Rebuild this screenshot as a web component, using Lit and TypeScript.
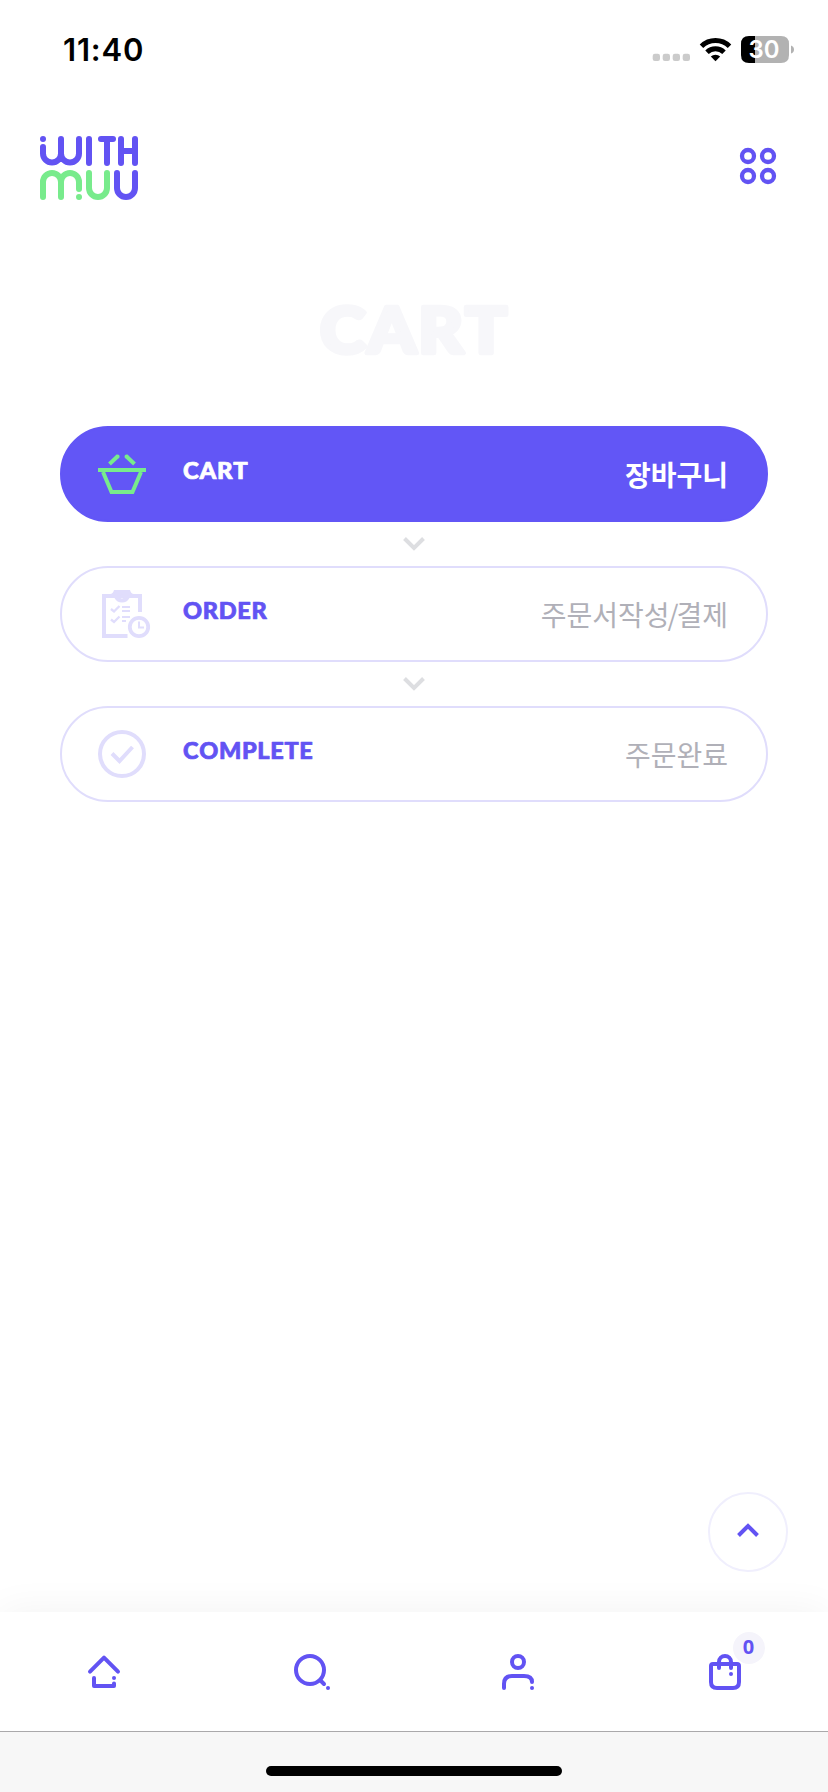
import { LitElement, html, css, svg } from "lit";
import { customElement } from "lit/decorators.js";

interface Step {
  label: string;
  width: number;
  caption: unknown;
  icon: unknown;
  active?: boolean;
}

const basket = html`<svg viewBox="98 448 52 52" width="52" height="52" fill="none" stroke="#78eb8c" stroke-width="4">
  <path d="M98 470H146M103 472L111.5 492H132.5L141 472" />
  <path d="M109.5 464L118 456M134.500 464L126 456" />
  <path d="M117.500 456.500h.1M126.500 456.500h.1" stroke-linecap="round" />
</svg>`;

const order = html`<svg viewBox="98 588 52 52" width="52" height="52" fill="none" stroke="#e0ddfc" stroke-width="4">
  <path d="M140 612V596H104V636H127.500" />
  <path fill="#e0ddfc" stroke="none" fill-rule="evenodd"
    d="M110 594Q113 594 114 590H130Q131 594 134 594V598H129.500Q127 602.500 122 602.500T114.500 598H110ZM122 594A2.200 2.200 0 1 0 122 598.400A2.200 2.200 0 1 0 122 594Z" />
  <path d="M111 609L114 611.500L119.500 606M111 619.500L114 622L119.500 616.500" stroke-width="2.300" />
  <path d="M122 607H130M122 611H130M122 617H130M122 621H126" stroke-width="1.800" />
  <circle cx="139" cy="627" r="9.200" stroke-width="3.800" />
  <path d="M139 621.500V627.500H144" stroke-width="2" />
</svg>`;

const complete = html`<svg viewBox="98 728 52 52" width="52" height="52" fill="none" stroke="#e0ddfc" stroke-width="4">
  <circle cx="122" cy="754" r="22" />
  <path d="M112 753.500L119.500 761L132.500 747" />
</svg>`;

const steps: Step[] = [
  { label: "CART", width: 65, caption: "장바구니", icon: basket, active: true },
  { label: "ORDER", width: 84, caption: html`주문서작성<span class="slash">/</span>결제`, icon: order },
  { label: "COMPLETE", width: 130, caption: "주문완료", icon: complete },
];

const navIcons = [
  { box: "86 1650 36 44", body: svg`<path d="M90 1671.700L104 1657.700L118 1671.700M94 1678V1686H114V1683.500M114 1678h.01" />` },
  { box: "292 1650 36 44", body: svg`<circle cx="309" cy="1670" r="14" /><path d="M319.500 1680.500L323 1684M327 1688h.01" />` },
  { box: "500 1650 36 44", body: svg`<circle cx="518" cy="1662" r="6" /><path d="M504 1688V1684Q504 1676 512 1676H524Q532 1676 532 1682M532 1688h.01" />` },
  { box: "707 1650 36 44", body: svg`<path d="M713 1664H737Q739 1664 739 1666V1682Q739 1688 733 1688H717Q711 1688 711 1682V1666Q711 1664 713 1664ZM719 1668V1662A6 6 0 0 1 731 1662V1668M731 1674h.01" />` },
];

@customElement("app-root")
export class AppRoot extends LitElement {
  static styles = css`
    :host {
      display: flex;
      flex-direction: column;
      height: 1792px;
      position: relative;
      overflow: hidden;
      background: #fff;
      font-family: Inter, "Noto Sans CJK KR", sans-serif;
    }
    svg { display: block; flex: none; overflow: visible; }
    .status {
      height: 100px;
      box-sizing: border-box;
      padding: 0 34px 0 63px;
      display: flex;
      align-items: center;
      justify-content: space-between;
    }
    .time { font-size: 31px; font-weight: 600; line-height: 40px; letter-spacing: 0.8px; }
    .header {
      height: 132px;
      box-sizing: border-box;
      padding: 0 50px 0 40px;
      display: flex;
      align-items: center;
      justify-content: space-between;
    }
    .title {
      height: 194px;
      display: flex;
      align-items: center;
      justify-content: center;
    }
    .rounded { font-family: Lato, sans-serif; font-weight: 900; font-kerning: none; letter-spacing: 0.03em; stroke-linejoin: round; }
    .steps { padding: 0 60px; display: flex; flex-direction: column; flex: 1; }
    .card {
      height: 96px;
      box-sizing: border-box;
      border: 2px solid #e0ddfc;
      border-radius: 48px;
      padding: 0 38px 0 36px;
      display: flex;
      align-items: center;
      color: #6253f3;
    }
    .card.active { background: #6256f6; border-color: #6256f6; color: #fff; }
    .label { margin-left: 33px; }
    .caption {
      margin-left: auto;
      font-family: "Noto Sans CJK KR", sans-serif;
      font-size: 28px;
      line-height: 40px;
      font-weight: 400;
      color: #b0b0b8;
    }
    .slash { margin: 0 -2px; }
    .active .caption { font-weight: 700; color: #fff; }
    .gap { height: 44px; display: flex; align-items: center; justify-content: center; }
    .top {
      position: absolute;
      left: 708px;
      top: 1492px;
      width: 80px;
      height: 80px;
      box-sizing: border-box;
      border: 2px solid #f0effd;
      border-radius: 50%;
      background: #fff;
      display: flex;
      align-items: center;
      justify-content: center;
    }
    .nav {
      height: 119px;
      display: grid;
      grid-template-columns: repeat(4, 1fr);
      align-items: center;
      justify-items: center;
      background: #fff;
      box-shadow: 0 0 40px rgba(0, 0, 0, 0.055);
    }
    .item { position: relative; }
    .badge {
      position: absolute;
      left: 26px;
      top: -18px;
      width: 32px;
      height: 32px;
      border-radius: 50%;
      background: #f5f4fb;
      color: #6253f3;
      font: 700 20px/30px "Open Sans", sans-serif;
      text-align: center;
    }
    .footer {
      height: 61px;
      box-sizing: border-box;
      border-top: 1px solid #aaa9ab;
      background: #f7f7f7;
      padding-top: 34px;
    }
    .indicator { width: 296px; height: 10px; border-radius: 5px; background: #000; margin: 0 auto; }
  `;

  render() {
    return html`
      <div class="status">
        <span class="time">11:40</span>
        <svg viewBox="652 30 142 40" width="142" height="40">
          <g fill="#cbcbcb">
            ${[652.700, 662.700, 672.700, 682.700].map((x) => svg`<rect x=${x} y="53.700" width="7.300" height="7.300" rx="2.200" />`)}
          </g>
          <g fill="none" stroke="#000" stroke-width="5">
            <path d="M701.500 46.200A20 20 0 0 1 729.500 46.200" />
            <path d="M707 52.200A12.300 12.300 0 0 1 724 52.200" />
          </g>
          <path d="M715.500 61.300L710.800 56.600A6.800 6.800 0 0 1 720.200 56.600Z" />
          <path d="M749 36H755V63H749Q741 63 741 55V44Q741 36 749 36Z" />
          <path d="M755 36H781Q789 36 789 44V55Q789 63 781 63H755Z" fill="#b2b2b2" />
          <path d="M791 45.500Q794 46.500 794 49.500T791 53.500Z" fill="#b2b2b2" />
          <text x="748.500" y="58.200" fill="#fff" font-size="24" font-weight="600" textLength="31" lengthAdjust="spacingAndGlyphs">30</text>
        </svg>
      </div>
      <div class="header">
        <svg viewBox="40 132 100 68" width="100" height="68" fill="none" stroke="#6253f3" stroke-width="6" stroke-linecap="round">
          <path d="M43 139h.01M43 147V153.500A9 9 0 0 0 61 153.500V139M61 153.500A9 9 0 0 0 79 153.500V139M89 139V163M101 139H113M107 139V163M121 139V163M135 139V163M121 151H135" />
          <path stroke="#78eb8c" d="M43 197V182A9 9 0 0 1 61 182V197M61 182A9 9 0 0 1 79 182V189M79 197h.01M89 173V188A9 9 0 0 0 107 188V173" />
          <path d="M117 173V188A9 9 0 0 0 135 188V173" />
        </svg>
        <svg viewBox="740 148 38 36" width="38" height="36" fill="none" stroke="#6253f3" stroke-width="4.300">
          ${[156, 176].map((y) => [748, 768].map((x) => svg`<circle cx=${x} cy=${y} r="6" />`))}
        </svg>
      </div>
      <div class="title">
        <svg width="190" height="54" viewBox="0 0 190 54">
          <text class="rounded" x="1" y="50.500" font-size="63" textLength="189" lengthAdjust="spacingAndGlyphs" fill="#f7f7fa" stroke="#f7f7fa" stroke-width="4.500">CART</text>
        </svg>
      </div>
      <div class="steps">
        ${steps.map(
          (s, i) => html`
            ${i
              ? html`<div class="gap"><svg width="24" height="18" viewBox="0 0 24 18" fill="none" stroke="#dddee1" stroke-width="4"><path d="M2.500 3.500L12 13L21.500 3.500" /></svg></div>`
              : ""}
            <div class="card ${s.active ? "active" : ""}">
              ${s.icon}
              <svg class="label" width=${s.width} height="24" viewBox="0 0 ${s.width} 24">
                <text class="rounded" x="0" y="17.400" font-size="22" textLength=${s.width + 0.5} lengthAdjust="spacingAndGlyphs" fill="currentColor" stroke="currentColor" stroke-width="0.700">${s.label}</text>
              </svg>
              <span class="caption">${s.caption}</span>
            </div>
          `
        )}
      </div>
      <div class="top">
        <svg width="24" height="20" viewBox="0 0 24 20" fill="none" stroke="#6253f3" stroke-width="4"><path d="M2.500 13.500L12 4L21.500 13.500" /></svg>
      </div>
      <div class="nav">
        ${navIcons.map(
          (n, i) => html`<div class="item">
            <svg viewBox=${n.box} width="36" height="44" fill="none" stroke="#6253f3" stroke-width="4" stroke-linecap="round" stroke-linejoin="round">${n.body}</svg>
            ${i === 3 ? html`<span class="badge">0</span>` : ""}
          </div>`
        )}
      </div>
      <div class="footer"><div class="indicator"></div></div>
    `;
  }
}
